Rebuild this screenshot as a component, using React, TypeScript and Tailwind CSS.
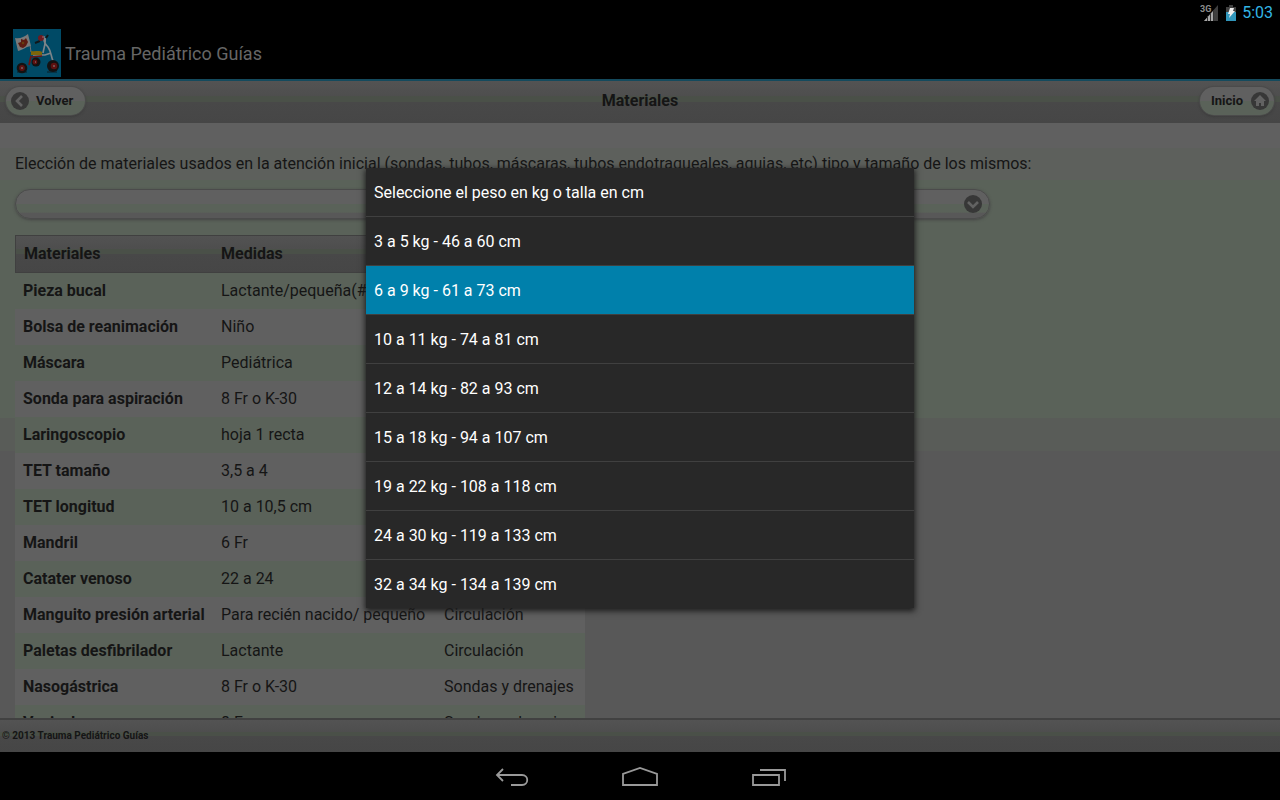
import { useState } from "react";

const materials = [
  ["Pieza bucal", "Lactante/pequeña(#1)", "Vía aérea"],
  ["Bolsa de reanimación", "Niño", "Respiración"],
  ["Máscara", "Pediátrica", "Respiración"],
  ["Sonda para aspiración", "8 Fr o K-30", "Vía aérea"],
  ["Laringoscopio", "hoja 1 recta", "Vía aérea"],
  ["TET tamaño", "3,5 a 4", "Vía aérea"],
  ["TET longitud", "10 a 10,5 cm", "Vía aérea"],
  ["Mandril", "6 Fr", "Vía aérea"],
  ["Catater venoso", "22 a 24", "Circulación"],
  ["Manguito presión arterial", "Para recién nacido/ pequeño", "Circulación"],
  ["Paletas desfibrilador", "Lactante", "Circulación"],
  ["Nasogástrica", "8 Fr o K-30", "Sondas y drenajes"],
  ["Vesical", "8 Fr", "Sondas y drenajes"],
];

const weights = [
  "Seleccione el peso en kg o talla en cm",
  "3 a 5 kg - 46 a 60 cm",
  "6 a 9 kg - 61 a 73 cm",
  "10 a 11 kg - 74 a 81 cm",
  "12 a 14 kg - 82 a 93 cm",
  "15 a 18 kg - 94 a 107 cm",
  "19 a 22 kg - 108 a 118 cm",
  "24 a 30 kg - 119 a 133 cm",
  "32 a 34 kg - 134 a 139 cm",
];

const barBg =
  "bg-[linear-gradient(#535353_0%,#4e4e4e_36%,#4a5048_37%,#4a5048_50%,#484848_51%,#464646_100%)]";

const pill =
  "flex h-7 items-center rounded-full bg-[linear-gradient(#606060_50%,#5a6259_51%)] text-[13px] font-bold shadow-[0_0_0_1px_#4b4b4b,0_1px_3px_#333]";

const Tricycle = () => (
  <svg viewBox="0 0 48 48" className="h-12 w-12" aria-hidden="true">
    <rect width="48" height="48" fill="#004a66" />
    {/* flag */}
    <path d="M2 9c5 1 9-1 13-4l3 12c-4 0-8 4-13 5Z" fill="#7a7a7a" />
    <path d="m8 10 3 1 2-2 2 4-2 4-3 2-3-1-2-4 3-1Z" fill="#5c1c12" />
    <circle cx="10" cy="14" r="1.3" fill="#66400f" />
    <path d="m17 16 1 7" stroke="#6b7478" />
    {/* frame */}
    <path d="M31 7c-1 5 1 8 4 11 3 4 3 9 5 14M32 9c1 5-1 9-2 15M20 26h12l6-2" fill="none" stroke="#7c8489" strokeWidth="1.7" />
    <path d="m18 27-2 9M19 28l10-1" fill="none" stroke="#6a1412" strokeWidth="1.7" />
    <path d="M18 22c4 1 8-1 11 1v3H18Z" fill="#7c650b" />
    <path d="m22 14 5-2m6-3 2-3" fill="none" stroke="#10171a" strokeWidth="2" />
    <circle cx="28" cy="9" r="3" fill="#6c1b20" />
    <circle cx="30" cy="8" r="1" fill="#8a5158" />
    {/* wheels */}
    <path d="M4 43h10m20 0h10" stroke="#072c3b" strokeWidth="1.5" />
    <circle cx="23" cy="33" r="4.5" fill="#121212" />
    <circle cx="22" cy="33" r="2.4" fill="#5d1110" />
    <circle cx="9" cy="39" r="5.3" fill="#121212" />
    <circle cx="9" cy="39" r="2.9" fill="#5d1110" />
    <circle cx="40" cy="37" r="6" fill="#121212" />
    <circle cx="41" cy="37" r="3.3" fill="#5d1110" />
    <path d="M8 39h2m12-6h1m17 4h2" stroke="#7a6060" strokeWidth="1.4" />
  </svg>
);

const StatusBar = () => (
  <div className="flex h-6 items-center justify-end gap-[6px] bg-black pt-[2px] pr-[7px]">
    <svg viewBox="0 0 20 20" className="h-5 w-5" aria-hidden="true">
      <path d="M4 18 18 2v16Z" fill="#3f3f3f" />
      <path d="M4 18 14 7v11Z" fill="#a8a8a8" />
      <path d="M7.5 13v5M10.5 10v8M13.5 7v11" stroke="#333" strokeWidth="1" />
      <text x="0" y="9" fontSize="9" fontWeight="bold" fill="#8c8c8c" fontFamily="Roboto">3G</text>
    </svg>
    <svg viewBox="0 0 10 16" className="h-4 w-[10px]" aria-hidden="true">
      <path d="M3 0h4v2h3v14H0V2h3Z" fill="#404040" />
      <path d="M0 7h10v9H0Z" fill="#3196bb" />
      <path d="m4 3 4 0-1 3h2l-6 7 1-4H2Z" fill="#eee" />
    </svg>
    <span className="text-base leading-6 text-[#33b5e5]">5:03</span>
  </div>
);

const NavBar = () => (
  <nav aria-label="Sistema" className="flex h-12 shrink-0 items-center justify-center gap-[92px] bg-black">
    <button aria-label="Atrás">
      <svg width="36" height="24" viewBox="0 0 36 24" fill="none" stroke="#999" strokeWidth="1.8">
        <path d="M9 5 3 11l6 6M3 11h25c7 0 7 10 0 10H17" />
      </svg>
    </button>
    <button aria-label="Pantalla de inicio">
      <svg width="36" height="24" viewBox="0 0 36 24" fill="none" stroke="#999" strokeWidth="1.8">
        <path d="M1 21V10l17-6 17 6v11Z" />
      </svg>
    </button>
    <button aria-label="Recientes">
      <svg width="36" height="24" viewBox="0 0 36 24" fill="none" stroke="#999" strokeWidth="1.8">
        <path d="M3 11h26v10H3ZM10 6h25v11" />
      </svg>
    </button>
  </nav>
);

export default function App() {
  const [selected, setSelected] = useState(2);

  return (
    <div className="relative flex h-screen flex-col overflow-hidden bg-[#585858] font-[Roboto,sans-serif] text-base text-[#151515]">
      <div className="shrink-0 border-b-2 border-[#144a5d] bg-black">
        <StatusBar />
        <div className="flex items-center gap-1 px-[13px] pt-[5px] pb-[2px]">
          <Tricycle />
          <span className="pt-[2px] text-lg text-[#666]">Trauma Pediátrico Guías</span>
        </div>
      </div>

      <header className={`grid h-[42px] shrink-0 grid-cols-3 items-center px-[6px] pb-[3px] ${barBg}`}>
        <button className={`gap-[7px] justify-self-start pr-3 pl-[5px] ${pill}`}>
          <svg width="18" height="18" viewBox="0 0 18 18" aria-hidden="true">
            <circle cx="9" cy="9" r="9" fill="#373737" />
            <path d="m11 4-5 5 5 5" fill="none" stroke="#626262" strokeWidth="2.6" />
          </svg>
          Volver
        </button>
        <h1 className="text-center font-bold">Materiales</h1>
        <button className={`gap-2 justify-self-end pr-[5px] pl-[11px] ${pill}`}>
          Inicio
          <svg width="18" height="18" viewBox="0 0 18 18" aria-hidden="true">
            <circle cx="9" cy="9" r="9" fill="#373737" />
            <path d="m9 3 6 6h-2v5h-3v-3H8v3H5V9H3Z" fill="#626262" />
          </svg>
        </button>
      </header>

      <main className="min-h-0 flex-1 overflow-hidden bg-[linear-gradient(#606060_25px,#5d605c_25px,#5d605c_57px,#5a6259_57px,#5a6259_295px,#595c58_295px,#595c58_328px,#585858_328px)] px-[15px] pt-[29px]">
        <p className="leading-6">
          Elección de materiales usados en la atención inicial (sondas, tubos, máscaras, tubos endotraqueales, agujas, etc) tipo y tamaño de los mismos:
        </p>
        <button
          aria-label="Peso o talla"
          aria-haspopup="listbox"
          className="mt-[13px] flex h-[30px] w-[78%] items-center justify-end rounded-full border border-[#4b4b4b] bg-[linear-gradient(#606060_50%,#5a6259_51%,#5a6259_80%,#585858_81%)] pr-[7px] shadow-[0_1px_3px_#444]"
        >
          <svg width="18" height="18" viewBox="0 0 18 18" aria-hidden="true">
            <circle cx="9" cy="9" r="9" fill="#373737" />
            <path d="m4 7 5 5 5-5" fill="none" stroke="#626262" strokeWidth="2.6" />
          </svg>
        </button>

        <table className="mt-4 border-separate border-spacing-0 text-left whitespace-nowrap">
          <thead>
            <tr className={`h-[38px] shadow-[inset_0_0_0_1px_#404040] ${barBg}`}>
              <th className="w-[198px] px-[9px]">Materiales</th>
              <th className="w-[223px] px-2">Medidas</th>
              <th className="w-[149px] px-2">Tipo</th>
            </tr>
          </thead>
          <tbody>
            {materials.map(([name, size, kind]) => (
              <tr key={name} className="h-9 odd:bg-[#5a6259] even:bg-[#606060]">
                <th scope="row" className="px-2">{name}</th>
                <td className="px-2">{size}</td>
                <td className="px-2">{kind}</td>
              </tr>
            ))}
          </tbody>
        </table>
      </main>

      <footer className={`h-[34px] shrink-0 border-t-2 border-[#414141] px-[2px] text-[10px] leading-8 font-bold ${barBg}`}>
        © 2013 Trauma Pediátrico Guías
      </footer>

      <NavBar />

      {/* Weight picker */}
      <div className="absolute inset-0 flex items-center justify-center pb-6">
        <div
          role="listbox"
          aria-label="Peso o talla"
          className="w-[548px] divide-y divide-[#404040] bg-[#282828] text-white shadow-[0_2px_6px_1px_#1c1c1c]"
        >
          {weights.map((w, i) => (
            <button
              key={w}
              role="option"
              aria-selected={i === selected}
              onClick={() => setSelected(i)}
              className={`block h-[49px] w-full px-2 pt-[2px] text-left last:h-12 ${i === selected ? "bg-[#0080ab]" : ""}`}
            >
              {w}
            </button>
          ))}
        </div>
      </div>
    </div>
  );
}
